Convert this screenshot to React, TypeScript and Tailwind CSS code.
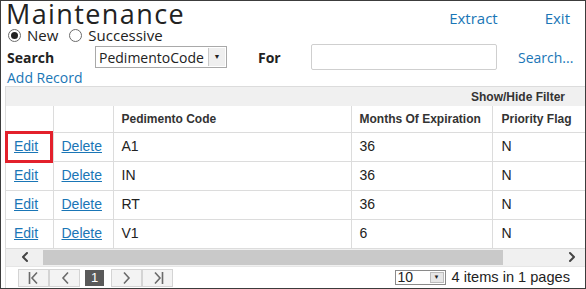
import { ChevronLeft, ChevronRight } from 'lucide-react'

const rows = [
  { code: 'A1', months: '36', flag: 'N' },
  { code: 'IN', months: '36', flag: 'N' },
  { code: 'RT', months: '36', flag: 'N' },
  { code: 'V1', months: '6', flag: 'N' },
]

const seg = { fontFamily: '"Open Sans", "Liberation Sans", sans-serif' }
const arial = { fontFamily: '"Liberation Sans", Arial, sans-serif' }

const Radio = ({ checked, label }: { checked?: boolean; label: string }) => (
  <label className="flex items-center gap-[6px]">
    <span className="w-[13px] h-[13px] rounded-full border border-[#6b6b6b] bg-white flex items-center justify-center">
      {checked && <span className="w-[7px] h-[7px] rounded-full bg-[#222]" />}
    </span>
    <span>{label}</span>
  </label>
)

const PagerBtn = ({ children }: { children: React.ReactNode }) => (
  <span className="w-[31px] h-[18px] border border-[#d4d4d4] bg-[#f3f3f3] flex items-center justify-center text-[#666]">
    {children}
  </span>
)

const PagerIcon = ({ dir, edge }: { dir: 'l' | 'r'; edge?: boolean }) => (
  <svg width="14" height="14" viewBox="0 0 14 14" fill="none" stroke="#6a6a6a" strokeWidth="1.6">
    {dir === 'l' ? (
      <>
        {edge && <line x1="2.5" y1="1" x2="2.5" y2="13" />}
        <polyline points="10,1.5 5,7 10,12.5" />
      </>
    ) : (
      <>
        <polyline points="4,1.5 9,7 4,12.5" />
        {edge && <line x1="11.5" y1="1" x2="11.5" y2="13" />}
      </>
    )}
  </svg>
)

export default function App() {
  return (
    <div
      className="w-[586px] h-[289px] border border-[#3c3c3c] bg-white text-[#222] overflow-hidden"
      style={seg}
    >
      <div className="flex items-start justify-between h-[27px] pl-[5px] pr-[15px]">
        <div className="text-[27px] leading-[21px] pt-[2px] tracking-[1.4px]">Maintenance</div>
        <div className="flex gap-[47px] text-[15px] leading-[17px] text-[#1a76b6] mt-[9px]">
          <span>Extract</span>
          <span>Exit</span>
        </div>
      </div>

      <div className="flex items-center gap-[11px] pl-[7px] text-[15px] leading-[15px]">
        <Radio checked label="New" />
        <Radio label="Successive" />
      </div>

      <div className="flex items-center pl-[6px] mt-[1px] h-[26px] text-[14px]">
        <span className="font-bold w-[88px]">Search</span>
        <span className="flex items-center h-[22px] w-[132px] border border-[#a9a9a9] bg-white">
          <span className="flex-1 pl-[3px] text-[14px]">PedimentoCode</span>
          <span className="w-[17px] h-[18px] mr-[1px] border-l border-[#c8c8c8] bg-[#efefef] flex items-center justify-center text-[7px]">▼</span>
        </span>
        <span className="font-bold ml-[31px] w-[53px]">For</span>
        <span className="h-[26px] w-[186px] border border-[#cfcfcf] rounded-[2px] bg-white" />
        <span className="ml-[21px] text-[#1a76b6]">Search...</span>
      </div>

      <div className="pl-[6px] text-[14px] leading-[15px] text-[#1a76b6]">Add Record</div>

      <div className="ml-[4px] mt-[1px] w-[581px] border-l border-t border-[#dcdcdc]" style={arial}>
        <div className="h-[19px] bg-[#f0f0f0] flex items-center justify-end pr-[21px] text-[12px] font-bold text-[#333]">
          Show/Hide Filter
        </div>
        <table className="border-collapse text-[14px] w-full table-fixed">
          <colgroup>
            <col className="w-[47px]" />
            <col className="w-[60px]" />
            <col className="w-[238px]" />
            <col className="w-[141px]" />
            <col />
          </colgroup>
          <thead>
            <tr className="h-[26px]">
              <th className="border-r border-b border-[#dcdcdc]" />
              <th className="border-r border-b border-[#dcdcdc]" />
              <th className="border-r border-b border-[#dcdcdc] text-left pl-[8px] text-[12px] font-bold text-[#333]">Pedimento Code</th>
              <th className="border-r border-b border-[#dcdcdc] text-left pl-[8px] text-[12px] font-bold text-[#333] whitespace-nowrap">Months Of Expiration</th>
              <th className="border-b border-[#dcdcdc] text-left pl-[9px] text-[12px] font-bold text-[#333] whitespace-nowrap">Priority Flag</th>
            </tr>
          </thead>
          <tbody>
            {rows.map((r, i) => (
              <tr key={r.code} className="h-[29px]">
                <td className="border-r border-b border-[#dcdcdc] pl-[8px] relative">
                  <span className="underline text-[#1a76b6]">Edit</span>
                  {i === 0 && (
                    <span className="absolute left-[-1px] top-[-2px] w-[48px] h-[32px] border-[3px] border-[#e3202b]" />
                  )}
                </td>
                <td className="border-r border-b border-[#dcdcdc] pl-[8px]">
                  <span className="underline text-[#1a76b6]">Delete</span>
                </td>
                <td className="border-r border-b border-[#dcdcdc] pl-[8px]">{r.code}</td>
                <td className="border-r border-b border-[#dcdcdc] pl-[8px]">{r.months}</td>
                <td className="border-b border-[#dcdcdc] pl-[9px]">{r.flag}</td>
              </tr>
            ))}
          </tbody>
        </table>
        <div className="h-[17px] flex items-center bg-[#f0f0f0]">
          <span className="w-[37px] flex justify-center">
            <ChevronLeft size={16} strokeWidth={3} className="text-[#444]" />
          </span>
          <span className="w-[460px] h-[15px] bg-[#c9c9c9]" />
          <span className="flex-1 flex justify-end pr-[6px]">
            <ChevronRight size={16} strokeWidth={3} className="text-[#444]" />
          </span>
        </div>
        <div className="h-[23px] flex items-center pl-[12px] text-[13px] border-t border-[#e6e6e6]">
          <div className="flex items-center">
            <PagerBtn><PagerIcon dir="l" edge /></PagerBtn>
            <PagerBtn><PagerIcon dir="l" /></PagerBtn>
            <span className="ml-[5px] mr-[7px] w-[19px] h-[16px] bg-[#5a5a5a] text-white text-[13px] flex items-center justify-center">1</span>
            <PagerBtn><PagerIcon dir="r" /></PagerBtn>
            <PagerBtn><PagerIcon dir="r" edge /></PagerBtn>
          </div>
          <div className="ml-auto flex items-center pr-[16px]">
            <span className="flex items-center w-[51px] h-[15px] border border-[#8a8a8a] bg-white">
              <span className="flex-1 pl-[2px] text-[14px] leading-none">10</span>
              <span className="w-[14px] h-[11px] mr-[1px] bg-[#e6e6e6] border border-[#bcbcbc] flex items-center justify-center text-[6px]">▼</span>
            </span>
            <span className="ml-[6px] text-[14.6px]">4 items in 1 pages</span>
          </div>
        </div>
      </div>
    </div>
  )
}
